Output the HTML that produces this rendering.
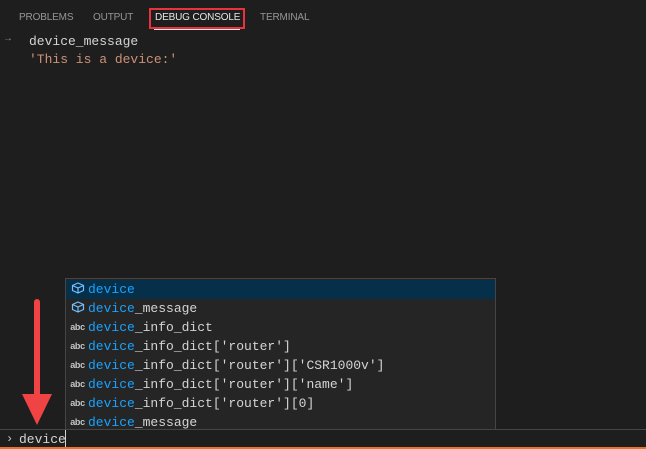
<!DOCTYPE html>
<html><head><style>
body{margin:0;width:646px;height:449px;background:#1e1e1e;position:relative;overflow:hidden;font-family:"Liberation Mono",monospace;}
.tab{position:absolute;top:12px;font-family:"Liberation Sans",sans-serif;font-size:10px;letter-spacing:-0.15px;color:#969696;}
.m{position:absolute;font-size:13px;white-space:pre;}
.row{position:absolute;left:1px;width:428px;height:19px;line-height:19px;font-size:13px;color:#d4d4d4;white-space:pre;}
.row b{font-weight:normal;color:#18a3ff;}
.ic{display:inline-block;width:21px;font-family:"Liberation Sans",sans-serif;font-size:9px;font-weight:bold;letter-spacing:-0.3px;color:#c5c5c5;text-align:center;vertical-align:top;}
</style></head><body>
<div class="tab" style="left:19px">PROBLEMS</div>
<div class="tab" style="left:93px">OUTPUT</div>
<div class="tab" style="left:155px;color:#e7e7e7">DEBUG CONSOLE</div>
<div class="tab" style="left:260px">TERMINAL</div>
<div style="position:absolute;left:149px;top:8px;width:92px;height:17px;border:2px solid #e8323c;"></div>
<div style="position:absolute;left:154px;top:29px;width:86px;height:1px;background:#e7e7e7"></div>
<div class="m" style="left:5px;top:34px;color:#888;font-size:10px">→</div>
<div class="m" style="left:29px;top:34px;color:#d4d4d4">device_message</div>
<div class="m" style="left:29px;top:52px;color:#ce9178">'This is a device:'</div>
<div style="position:absolute;left:65px;top:278px;width:429px;height:151px;background:#252526;border:1px solid #454545;border-bottom:none;">
<div style="position:absolute;left:0;top:1px;width:429px;height:19px;background:#062f4a"></div>
<div class="row" style="top:1px"><span class="ic"><svg width="14" height="14" viewBox="0 0 14 14" style="vertical-align:-3px"><path d="M7 2L12.5 4.5V9.5L7 12L1.5 9.5V4.5Z M1.5 4.5L7 7L12.5 4.5 M7 7V12" fill="none" stroke="#75beff" stroke-width="1.2"/></svg></span><b>device</b></div>
<div class="row" style="top:20px"><span class="ic"><svg width="14" height="14" viewBox="0 0 14 14" style="vertical-align:-3px"><path d="M7 2L12.5 4.5V9.5L7 12L1.5 9.5V4.5Z M1.5 4.5L7 7L12.5 4.5 M7 7V12" fill="none" stroke="#75beff" stroke-width="1.2"/></svg></span><b>device</b>_message</div>
<div class="row" style="top:39px"><span class="ic">abc</span><b>device</b>_info_dict</div>
<div class="row" style="top:58px"><span class="ic">abc</span><b>device</b>_info_dict['router']</div>
<div class="row" style="top:77px"><span class="ic">abc</span><b>device</b>_info_dict['router']['CSR1000v']</div>
<div class="row" style="top:96px"><span class="ic">abc</span><b>device</b>_info_dict['router']['name']</div>
<div class="row" style="top:115px"><span class="ic">abc</span><b>device</b>_info_dict['router'][0]</div>
<div class="row" style="top:134px"><span class="ic">abc</span><b>device</b>_message</div>
</div>
<div style="position:absolute;left:0;top:429px;width:646px;height:1px;background:#454545"></div>
<div class="m" style="left:6px;top:432px;color:#c5c5c5;font-size:12px">›</div>
<div class="m" style="left:19px;top:432px;color:#d4d4d4">device</div>
<div style="position:absolute;left:65px;top:430px;width:1px;height:17px;background:#d4d4d4"></div>
<div style="position:absolute;left:0;top:447px;width:646px;height:2px;background:#e8732b"></div>
<div style="position:absolute;left:34px;top:299px;width:6px;height:100px;background:#f04444;border-radius:3px"></div>
<svg style="position:absolute;left:22px;top:394px" width="30" height="31"><path d="M0 0H30L15 31Z" fill="#f04444"/></svg>
</body></html>
